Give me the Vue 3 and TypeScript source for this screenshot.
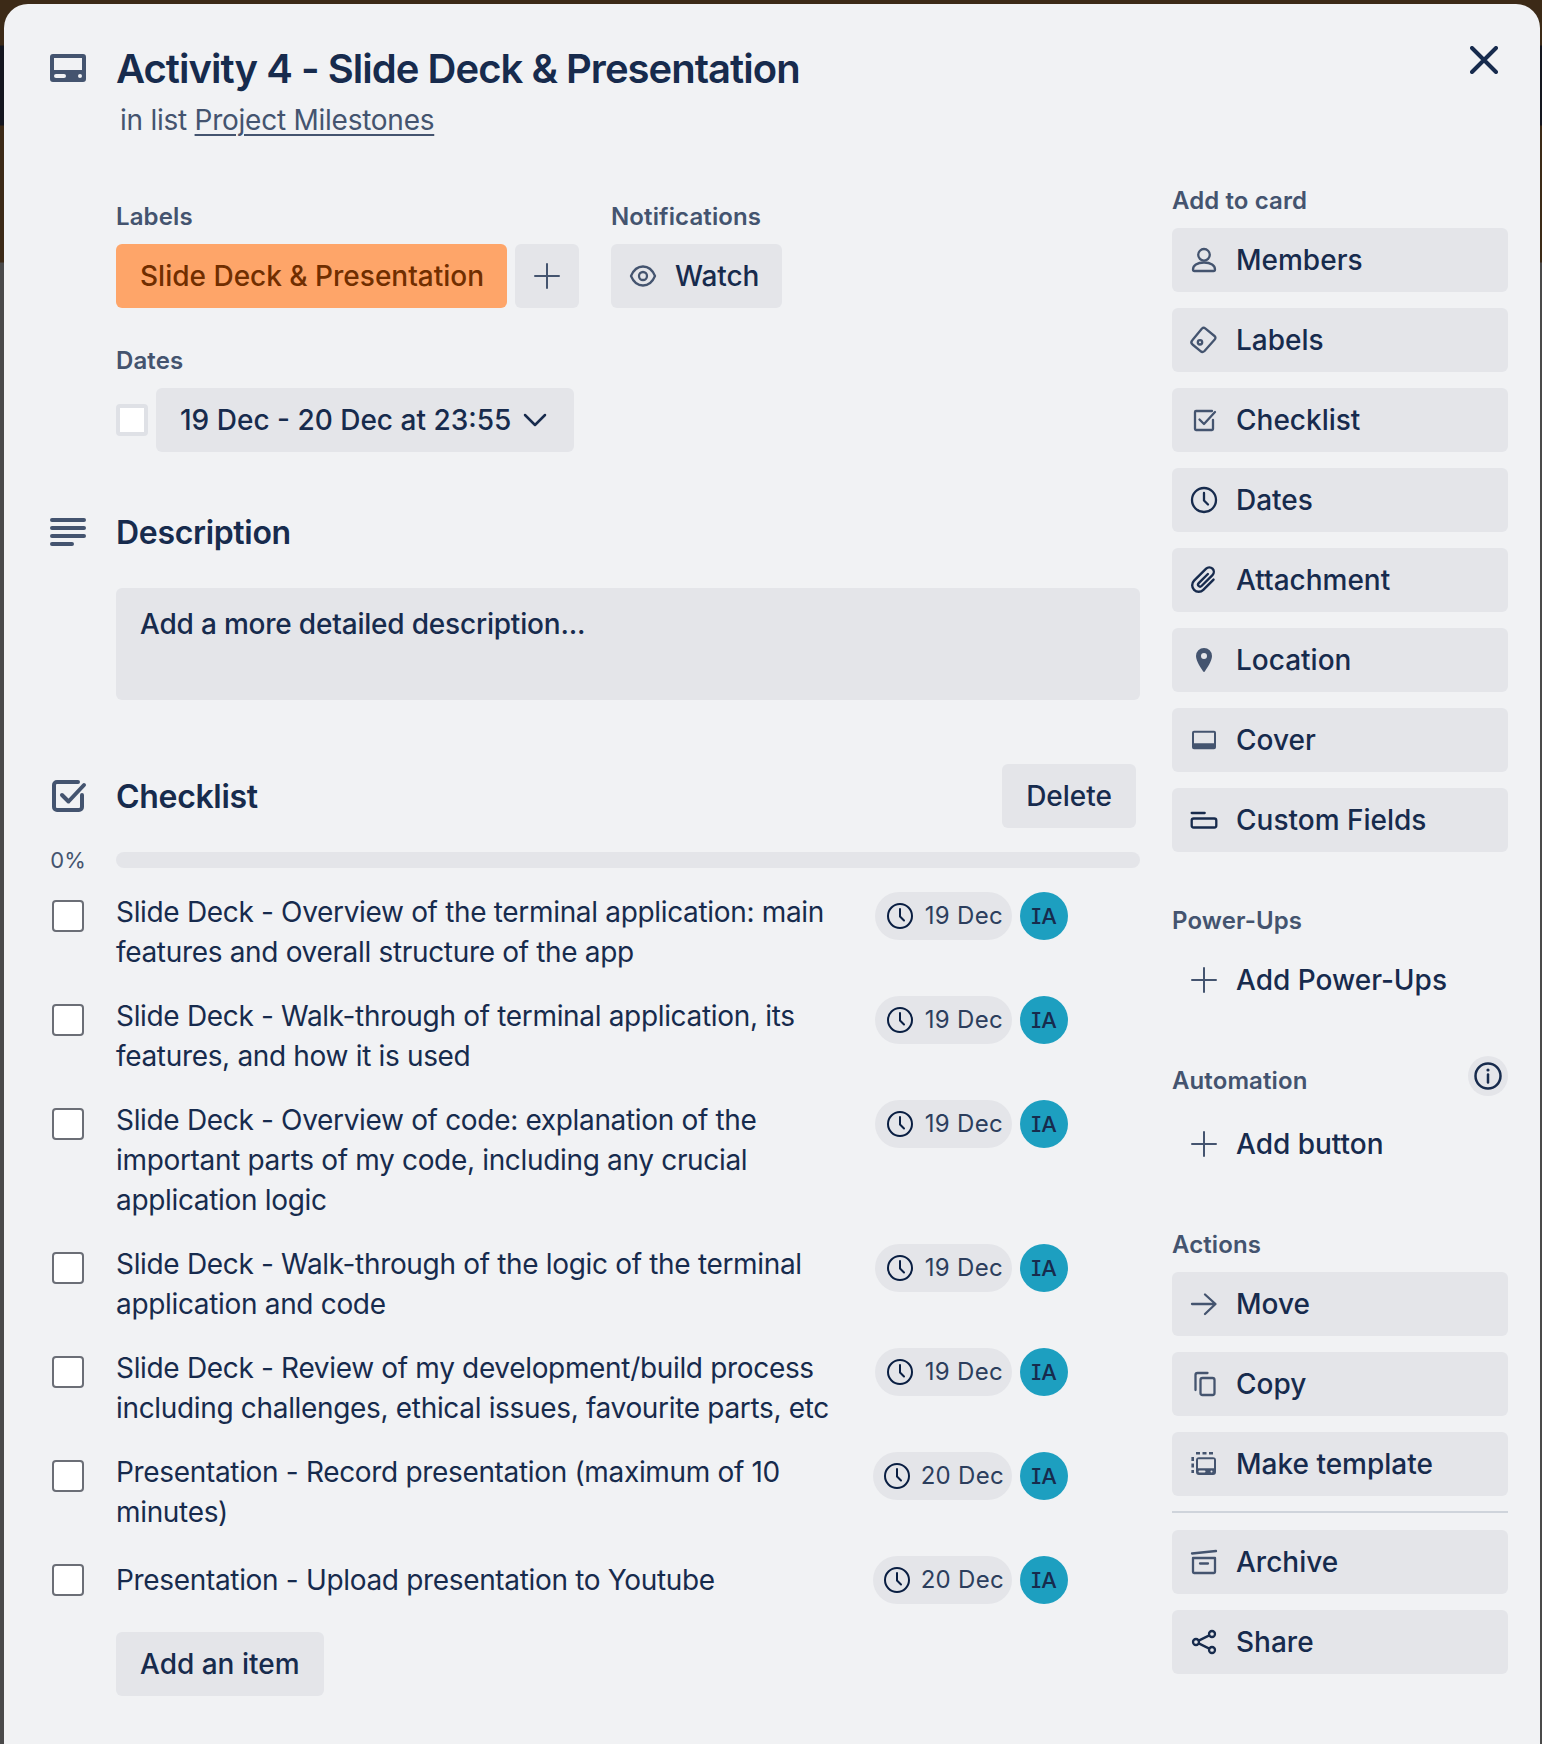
<script setup lang="ts">
interface ChecklistItem { text: string; date: string }
interface SideAction { label: string; icon: string; dark?: boolean }

const items: ChecklistItem[] = [
  { text: 'Slide Deck - Overview of the terminal application: main features and overall structure of the app', date: '19 Dec' },
  { text: 'Slide Deck - Walk-through of terminal application, its features, and how it is used', date: '19 Dec' },
  { text: 'Slide Deck - Overview of code: explanation of the important parts of my code, including any crucial application logic', date: '19 Dec' },
  { text: 'Slide Deck - Walk-through of the logic of the terminal application and code', date: '19 Dec' },
  { text: 'Slide Deck - Review of my development/build process including challenges, ethical issues, favourite parts, etc', date: '19 Dec' },
  { text: 'Presentation - Record presentation (maximum of 10 minutes)', date: '20 Dec' },
  { text: 'Presentation - Upload presentation to Youtube', date: '20 Dec' },
]

const addToCard: SideAction[] = [
  { label: 'Members', icon: 'members' },
  { label: 'Labels', icon: 'labels' },
  { label: 'Checklist', icon: 'checklist' },
  { label: 'Dates', icon: 'clock', dark: true },
  { label: 'Attachment', icon: 'attachment', dark: true },
  { label: 'Location', icon: 'location' },
  { label: 'Cover', icon: 'cover' },
  { label: 'Custom Fields', icon: 'fields', dark: true },
]
const actionsA: SideAction[] = [
  { label: 'Move', icon: 'move' },
  { label: 'Copy', icon: 'copy' },
  { label: 'Make template', icon: 'template' },
]
const actionsB: SideAction[] = [
  { label: 'Archive', icon: 'archive' },
  { label: 'Share', icon: 'share', dark: true },
]
</script>

<template>
  <div class="modal">
    <svg class="close" viewBox="0 0 28 28" aria-label="Close">
      <path d="M2 2 L26 26 M26 2 L2 26" />
    </svg>

    <header class="head">
      <svg class="lead-icon" viewBox="0 0 36 36">
        <path class="fill" fill-rule="evenodd" d="M3 4h30a3 3 0 0 1 3 3v22a3 3 0 0 1-3 3H3a3 3 0 0 1-3-3V7a3 3 0 0 1 3-3zm1 4v12h28V8zm2 16a2 2 0 0 0 0 4h8a2 2 0 0 0 0-4zm24 0a2 2 0 1 0 0 4 2 2 0 0 0 0-4z" />
      </svg>
      <div class="head-text">
        <h1 class="title">Activity 4 - Slide Deck &amp; Presentation</h1>
        <p class="sub">in list <a class="sub-link">Project Milestones</a></p>
      </div>
    </header>

    <div class="columns">
      <main class="main">
        <div class="meta-row">
          <div>
            <h3 class="meta-label">Labels</h3>
            <div class="meta-controls">
              <span class="label-chip">Slide Deck &amp; Presentation</span>
              <span class="btn square">
                <svg class="ic" viewBox="0 0 32 32"><path class="ln thin" d="M16 4v24M4 16h24" /></svg>
              </span>
            </div>
          </div>
          <div>
            <h3 class="meta-label">Notifications</h3>
            <span class="btn watch">
              <svg class="ic" viewBox="0 0 32 32">
                <path class="ln" d="M4 16C6.500 10 11 6.500 16 6.500S25.500 10 28 16C25.500 22 21 25.500 16 25.500S6.500 22 4 16z" />
                <circle class="ln" cx="16" cy="16" r="4" />
              </svg>
              Watch
            </span>
          </div>
        </div>

        <div class="dates">
          <h3 class="meta-label">Dates</h3>
          <div class="dates-row">
            <span class="date-check"></span>
            <span class="btn date-btn">
              19 Dec - 20 Dec at 23:55
              <svg class="chev" viewBox="0 0 24 14"><path d="M2 2l10 10L22 2" /></svg>
            </span>
          </div>
        </div>

        <section class="desc">
          <div class="sec-head">
            <svg class="lead-icon abs" viewBox="0 0 36 28">
              <path class="thick round" d="M2 2h32M2 10h32M2 18h32M2 26h20" />
            </svg>
            <h2 class="sec-title">Description</h2>
          </div>
          <div class="desc-box">Add a more detailed description...</div>
        </section>

        <section class="checklist">
          <div class="sec-head check-head">
            <svg class="lead-icon abs chk" viewBox="0 0 34 32">
              <path class="thick round" d="M26 2H5a3 3 0 0 0-3 3v22a3 3 0 0 0 3 3h22a3 3 0 0 0 3-3V15" />
              <path class="thick round" d="M10 15l6.500 6.500L32 5" />
            </svg>
            <h2 class="sec-title">Checklist</h2>
            <span class="btn delete">Delete</span>
          </div>

          <div class="progress">
            <span class="pct">0%</span>
            <div class="bar"></div>
          </div>

          <ul class="items">
            <li v-for="item in items" :key="item.text" class="item">
              <span class="box"></span>
              <span class="item-text">{{ item.text }}</span>
              <div class="item-ctl">
                <span class="pill" :class="{ wide: item.date === '20 Dec' }">
                  <svg class="clock" viewBox="0 0 32 32">
                    <circle cx="16" cy="16" r="12" />
                    <path d="M16 9v7.500l4 4" />
                  </svg>
                  {{ item.date }}
                </span>
                <span class="avatar">IA</span>
              </div>
            </li>
          </ul>

          <span class="btn add-item">Add an item</span>
        </section>
      </main>

      <aside class="side">
        <h3 class="side-label">Add to card</h3>
        <div class="stack">
          <div v-for="a in addToCard" :key="a.label" class="btn act">
            <svg class="ic" :class="{ dark: a.dark }" viewBox="0 0 32 32">
              <template v-if="a.icon === 'members'">
                <circle class="ln" cx="16" cy="10.800" r="5.800" />
                <path class="ln" d="M5 25.500c0-4 4-7 11-7s11 3 11 7c0 .8-.5 1.500-1.500 1.500h-19C5.500 27 5 26.300 5 25.500z" />
              </template>
              <template v-else-if="a.icon === 'labels'">
                <path class="ln" d="M14 4.500c1-.9 2.200-.9 3.200-.1L26.500 12c1.200 1 1.300 2.300.2 3.500L16.500 27c-1.200 1.200-2.800 1.300-4 .2L4.500 20.500c-1.400-1.300-1.400-3-.2-4.300z" />
                <circle class="ln" cx="12" cy="18.300" r="2.200" />
              </template>
              <template v-else-if="a.icon === 'checklist'">
                <path class="ln" d="M24 7H8a1 1 0 0 0-1 1v17a1 1 0 0 0 1 1h16a1 1 0 0 0 1-1v-9" />
                <path class="ln" d="M11.500 15.500l4.500 4.500L27 8" />
              </template>
              <template v-else-if="a.icon === 'clock'">
                <circle class="ln" cx="16" cy="16" r="12" />
                <path class="ln" d="M16 9v7.500l4 4" />
              </template>
              <template v-else-if="a.icon === 'attachment'">
                <path class="ln clip" transform="rotate(45 16 16)" d="M22.500 9v14.500a6.500 6.500 0 0 1-13 0V6.500a4.500 4.500 0 0 1 9 0V22a2 2 0 0 1-4 0V9" />
              </template>
              <template v-else-if="a.icon === 'location'">
                <path class="fl" fill-rule="evenodd" d="M16 4a8 8 0 0 0-8 8c0 5.500 5.500 12.500 7 15.300a1.200 1.200 0 0 0 2 0c1.500-2.800 7-9.800 7-15.300a8 8 0 0 0-8-8zm0 5a3 3 0 1 1 0 6 3 3 0 0 1 0-6z" />
              </template>
              <template v-else-if="a.icon === 'cover'">
                <path class="fl" fill-rule="evenodd" d="M6 6.700h20a2 2 0 0 1 2 2v14.600a2 2 0 0 1-2 2H6a2 2 0 0 1-2-2V8.700a2 2 0 0 1 2-2zm0 2v10.600h20V8.700z" />
              </template>
              <template v-else-if="a.icon === 'fields'">
                <path class="ln" d="M3.700 9h13" />
                <rect class="ln" x="3.700" y="14.500" width="24.600" height="9" rx="2" />
              </template>
              <path v-else class="ln" d="" />
            </svg>
            {{ a.label }}
          </div>
        </div>

        <h3 class="side-label later">Power-Ups</h3>
        <div class="btn act plain">
          <svg class="ic" viewBox="0 0 32 32"><path class="ln thin" d="M16 4v24M4 16h24" /></svg>
          Add Power-Ups
        </div>

        <div class="auto-head">
          <h3 class="side-label">Automation</h3>
          <span class="info">
            <svg viewBox="0 0 40 40">
              <circle cx="20" cy="20" r="12.500" />
              <path d="M20 18.500v8" />
              <circle class="dot" cx="20" cy="14" r="1.600" />
            </svg>
          </span>
        </div>
        <div class="btn act plain">
          <svg class="ic" viewBox="0 0 32 32"><path class="ln thin" d="M16 4v24M4 16h24" /></svg>
          Add button
        </div>

        <h3 class="side-label later">Actions</h3>
        <div class="stack">
          <div v-for="a in actionsA" :key="a.label" class="btn act">
            <svg class="ic" viewBox="0 0 32 32">
              <template v-if="a.icon === 'move'">
                <path class="ln" d="M4 16h23M17 6.500L27.500 16 17 26" />
              </template>
              <template v-else-if="a.icon === 'copy'">
                <rect class="ln" x="12.500" y="10" width="14" height="17" rx="2" />
                <path class="ln" d="M7.500 22V7a2 2 0 0 1 2-2h10" />
              </template>
              <template v-else>
                <path class="ln dash" d="M8 5.300h17M4.700 9v16" />
                <path class="fl" fill-rule="evenodd" d="M11 9.300h14a3 3 0 0 1 3 3V24a3 3 0 0 1-3 3H11a3 3 0 0 1-3-3V12.300a3 3 0 0 1 3-3zm-1 2v9h16v-9zM11.500 22.500a1 1 0 0 0 0 2h5a1 1 0 0 0 0-2zm12 0a1 1 0 1 0 0 2 1 1 0 0 0 0-2z" />
              </template>
            </svg>
            {{ a.label }}
          </div>
        </div>
        <hr class="rule" />
        <div class="stack">
          <div v-for="a in actionsB" :key="a.label" class="btn act">
            <svg class="ic" :class="{ dark: a.dark }" viewBox="0 0 32 32">
              <template v-if="a.icon === 'archive'">
                <path class="ln" d="M4 7.500L28 5" />
                <path class="ln" d="M5 12h22v14a1 1 0 0 1-1 1H6a1 1 0 0 1-1-1z" />
                <path class="ln" d="M12 17.500h8" />
              </template>
              <template v-else>
                <circle class="ln" cx="24" cy="8" r="3" />
                <circle class="ln" cx="8" cy="16" r="3" />
                <circle class="ln" cx="24" cy="24" r="3" />
                <path class="ln" d="M21.300 9.400l-10.600 5.200M10.700 17.400l10.600 5.200" />
              </template>
            </svg>
            {{ a.label }}
          </div>
        </div>
      </aside>
    </div>
  </div>
</template>

<style>
html, body {
  margin: 0;
  height: 1744px;
  overflow: hidden;
  background: linear-gradient(180deg, #3c2a17 0, #3c2a17 45px, #14161f 46px, #14161f 125px, #3c2a17 126px, #3c2a17 262px, #4a4a4a 263px, #4a4a4a 100%);
}
</style>

<style scoped>
.modal {
  position: relative;
  box-sizing: border-box;
  width: 1536px;
  height: 1740px;
  margin: 4px 0 0 4px;
  background: #f1f2f4;
  border-radius: 24px 24px 0 0;
  color: #172b4d;
  font-family: Inter, "Liberation Sans", sans-serif;
  font-size: 28px;
  line-height: 40px;
  overflow: hidden;
}
h1, h2, h3, p, ul { margin: 0; padding: 0; }
ul { list-style: none; }

.close {
  position: absolute;
  top: 42px;
  right: 42px;
  width: 28px;
  height: 28px;
  fill: none;
  stroke: #172b4d;
  stroke-width: 4;
  stroke-linecap: round;
}

.head {
  display: flex;
  padding: 41px 0 0 46px;
  gap: 30px;
}
.lead-icon {
  width: 36px;
  height: 36px;
  flex: none;
  margin-top: 5px;
  overflow: visible;
}
.fill { fill: #44546f; }
.title {
  font-size: 40px;
  line-height: 48px;
  font-weight: 600;
  letter-spacing: -0.97px;
}
.sub {
  margin: 7px 0 0 4px;
  color: #44546f;
  line-height: 40px;
  letter-spacing: -0.25px;
}
.sub-link {
  text-decoration: underline;
  text-decoration-thickness: 2px;
  text-underline-offset: 4px;
}

.columns {
  display: flex;
  margin-top: 40px;
  padding-left: 112px;
}
.main {
  width: 1024px;
  flex: none;
}
.side {
  width: 336px;
  flex: none;
  margin-left: 32px;
}

.btn {
  display: inline-flex;
  align-items: center;
  box-sizing: border-box;
  height: 64px;
  background: #e4e5e9;
  border-radius: 6px;
  font-weight: 500;
  color: #172b4d;
}
.ic {
  width: 32px;
  height: 32px;
  flex: none;
  color: #44546f;
}
.ic.dark { color: #172b4d; }
.ln {
  fill: none;
  stroke: currentColor;
  stroke-width: 2.300;
  stroke-linecap: round;
  stroke-linejoin: round;
}
.ln.thin { stroke-width: 2; }
.clip { stroke-width: 2.400; }
.dash { stroke-dasharray: 4 2.500; stroke-width: 2.600; stroke-linecap: butt; }
.fl { fill: currentColor; }

.meta-row {
  display: flex;
  gap: 32px;
  padding-top: 16px;
}
.meta-label {
  font-size: 24px;
  line-height: 42px;
  font-weight: 600;
  letter-spacing: 0.12px;
  color: #44546f;
  margin-bottom: 6px;
}
.meta-controls {
  display: flex;
  gap: 8px;
}
.label-chip {
  display: inline-flex;
  align-items: center;
  box-sizing: border-box;
  width: 391px;
  height: 64px;
  padding: 0 24px;
  background: #fea569;
  color: #702e00;
  border-radius: 6px;
  font-weight: 500;
  white-space: nowrap;
}
.square {
  width: 64px;
  justify-content: center;
}
.watch {
  padding: 0 23px 0 16px;
  gap: 16px;
  letter-spacing: -0.1px;
}
.dates {
  margin-top: 32px;
}
.dates-row {
  display: flex;
  align-items: center;
  gap: 8px;
}
.date-check {
  box-sizing: border-box;
  width: 32px;
  height: 32px;
  background: #fff;
  border: 4px solid #dfe1e6;
  border-radius: 4px;
}
.date-btn {
  padding: 0 27px 0 24px;
  gap: 12px;
}
.chev {
  width: 24px;
  height: 14px;
  fill: none;
  stroke: #172b4d;
  stroke-width: 2.500;
  stroke-linecap: round;
  stroke-linejoin: round;
}

.sec-head {
  position: relative;
  display: flex;
  align-items: center;
  justify-content: space-between;
  height: 64px;
}
.abs {
  position: absolute;
  left: -66px;
  top: 50%;
  margin-top: -14px;
  height: 28px;
}
.chk {
  left: -64px;
  margin-top: -16px;
  width: 34px;
  height: 32px;
}
.thick {
  fill: none;
  stroke: #44546f;
  stroke-width: 4;
}
.round {
  stroke-linecap: round;
  stroke-linejoin: round;
}
.sec-title {
  padding-top: 2px;
  font-size: 32px;
  line-height: 40px;
  font-weight: 600;
  letter-spacing: -0.32px;
}
.desc {
  margin-top: 48px;
}
.desc-box {
  box-sizing: border-box;
  height: 112px;
  margin-top: 24px;
  padding: 16px 24px;
  background: #e4e5e9;
  border-radius: 6px;
  font-weight: 500;
  letter-spacing: -0.2px;
}
.checklist {
  margin-top: 64px;
}
.delete {
  padding: 0 24px;
  margin-right: 4px;
}

.progress {
  position: relative;
  display: flex;
  align-items: center;
  margin-top: 24px;
  height: 16px;
}
.pct {
  position: absolute;
  left: -66px;
  top: -12px;
  width: 36px;
  text-align: center;
  font-size: 22px;
  line-height: 40px;
  color: #44546f;
}
.bar {
  width: 100%;
  height: 16px;
  border-radius: 8px;
  background: #e4e5e9;
}

.items {
  display: flex;
  flex-direction: column;
  gap: 24px;
  margin-top: 24px;
}
.item {
  position: relative;
  display: flex;
  align-items: flex-start;
  min-height: 48px;
}
.box {
  position: absolute;
  left: -64px;
  top: 8px;
  box-sizing: border-box;
  width: 32px;
  height: 32px;
  background: #fff;
  border: 2px solid #6b6e76;
  border-radius: 4px;
}
.item-text {
  width: 744px;
  flex: none;
  min-height: 48px;
  display: flex;
  align-items: center;
  letter-spacing: -0.33px;
}
.item-ctl {
  margin-left: auto;
  margin-right: 72px;
  display: flex;
  gap: 8px;
  flex: none;
}
.pill {
  display: inline-flex;
  align-items: center;
  gap: 9px;
  height: 48px;
  padding: 0 9px;
  background: #e4e5e9;
  border-radius: 24px;
  font-size: 24px;
  letter-spacing: 0.3px;
  color: #2c3e5d;
}
.pill.wide {
  gap: 8px;
  padding: 0 8px;
}
.clock {
  width: 32px;
  height: 32px;
  fill: none;
  stroke: #091e42;
  stroke-width: 2;
  stroke-linecap: round;
  stroke-linejoin: round;
}
.avatar {
  display: inline-flex;
  align-items: center;
  justify-content: center;
  width: 48px;
  height: 48px;
  border-radius: 50%;
  background: #1d9fc0;
  color: #172b4d;
  font-size: 22px;
  font-weight: 500;
  font-feature-settings: "cv08";
}
.add-item {
  margin-top: 28px;
  padding: 0 24px;
}

.side-label {
  font-size: 24px;
  line-height: 42px;
  font-weight: 600;
  letter-spacing: 0.1px;
  color: #44546f;
  margin-bottom: 6px;
}
.side-label.later {
  margin-top: 48px;
}
.stack {
  display: flex;
  flex-direction: column;
  gap: 16px;
}
.act {
  display: flex;
  width: 336px;
  padding-left: 16px;
  gap: 16px;
}
.plain {
  background: transparent;
}
.auto-head {
  display: flex;
  justify-content: space-between;
  align-items: flex-start;
  height: 52px;
  margin-top: 48px;
}
.info {
  width: 40px;
  height: 40px;
  margin-top: -4px;
  border-radius: 50%;
  background: #e4e5e9;
}
.info svg {
  display: block;
  width: 40px;
  height: 40px;
  fill: none;
  stroke: #172b4d;
  stroke-width: 2.500;
  stroke-linecap: round;
}
.info .dot {
  fill: #172b4d;
  stroke: none;
}
.rule {
  height: 2px;
  margin: 15px 0 17px;
  border: 0;
  background: #cfd4db;
}
</style>
